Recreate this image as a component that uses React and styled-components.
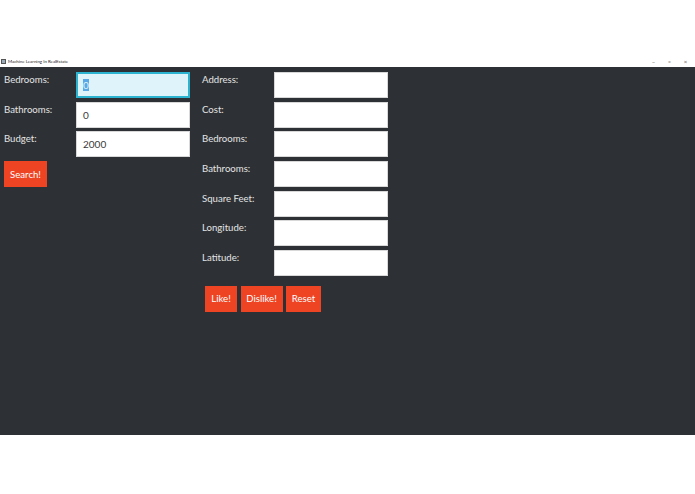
import React from 'react';
import styled, { createGlobalStyle } from 'styled-components';

const GlobalStyle = createGlobalStyle`
  html, body {
    margin: 0;
    padding: 0;
    background: #fff;
  }
  * {
    box-sizing: border-box;
  }
`;

const Page = styled.div`
  width: 695px;
  height: 494px;
  padding-top: 56px;
  background: #fff;
  font-family: Lato, 'Open Sans', sans-serif;
`;

const TitleBar = styled.div`
  height: 11px;
  display: flex;
  align-items: center;
  padding-left: 1px;
  background: #fff;
`;

const AppIcon = styled.div`
  width: 5px;
  height: 5px;
  border: 1px solid #555;
  background: #9ab;
  margin-right: 2px;
`;

const Title = styled.span`
  font-size: 4.4px;
  color: #222;
  flex: 1;
`;

const Controls = styled.div`
  display: flex;
  align-items: center;
  gap: 11px;
  padding-right: 7px;
`;

const Control = styled.span`
  width: 5px;
  font-size: 6px;
  line-height: 6px;
  color: #555;
  text-align: center;
`;

const Body = styled.div`
  height: 368px;
  background: #2d3135;
  display: flex;
  padding: 5px 0 0 4px;
  gap: 12px;
`;

const Column = styled.div`
  display: flex;
  flex-direction: column;
  gap: 3.7px;
`;

const Row = styled.div`
  display: flex;
  height: 26px;
`;

const Label = styled.div`
  width: 72px;
  padding-top: 1px;
  font-size: 9.6px;
  line-height: 14px;
  color: #e4e4e4;
`;

const Field = styled.div`
  width: 114px;
  height: 26px;
  background: ${({ focused }) => (focused ? '#dff4fa' : '#fff')};
  border: ${({ focused }) => (focused ? '2px solid #2bb3cf' : '1px solid #d8d8d8')};
  display: flex;
  align-items: center;
  padding-left: ${({ focused }) => (focused ? '5px' : '6px')};
  font-size: 10px;
  color: #3a3a3a;
`;

const Selected = styled.span`
  background: #5aa9e6;
  color: #dff4fa;
`;

const Button = styled.button`
  height: 26px;
  width: ${({ w }) => w}px;
  border: none;
  padding: 0;
  background: #ef4423;
  color: #fff;
  font-family: inherit;
  font-size: 9.6px;
`;

const ButtonRow = styled.div`
  display: flex;
  gap: 3.5px;
  margin-top: ${({ top }) => top}px;
  padding-left: ${({ left }) => left}px;
`;

const searchFields = [
  { label: 'Bedrooms:', value: '0', focused: true },
  { label: 'Bathrooms:', value: '0' },
  { label: 'Budget:', value: '2000' },
];

const resultFields = ['Address:', 'Cost:', 'Bedrooms:', 'Bathrooms:', 'Square Feet:', 'Longitude:', 'Latitude:'];

export default function App() {
  return (
    <Page>
      <GlobalStyle />
      <TitleBar>
        <AppIcon />
        <Title>Machine Learning In RealEstate</Title>
        <Controls>
          <Control>–</Control>
          <Control>▫</Control>
          <Control>×</Control>
        </Controls>
      </TitleBar>
      <Body>
        <Column>
          {searchFields.map((f) => (
            <Row key={f.label}>
              <Label>{f.label}</Label>
              <Field focused={f.focused}>
                {f.focused ? <Selected>{f.value}</Selected> : f.value}
              </Field>
            </Row>
          ))}
          <ButtonRow top={0} left={0}>
            <Button w={43}>Search!</Button>
          </ButtonRow>
        </Column>
        <Column>
          {resultFields.map((l) => (
            <Row key={l}>
              <Label>{l}</Label>
              <Field />
            </Row>
          ))}
          <ButtonRow top={6} left={3}>
            <Button w={32}>Like!</Button>
            <Button w={42}>Dislike!</Button>
            <Button w={35}>Reset</Button>
          </ButtonRow>
        </Column>
      </Body>
    </Page>
  );
}
